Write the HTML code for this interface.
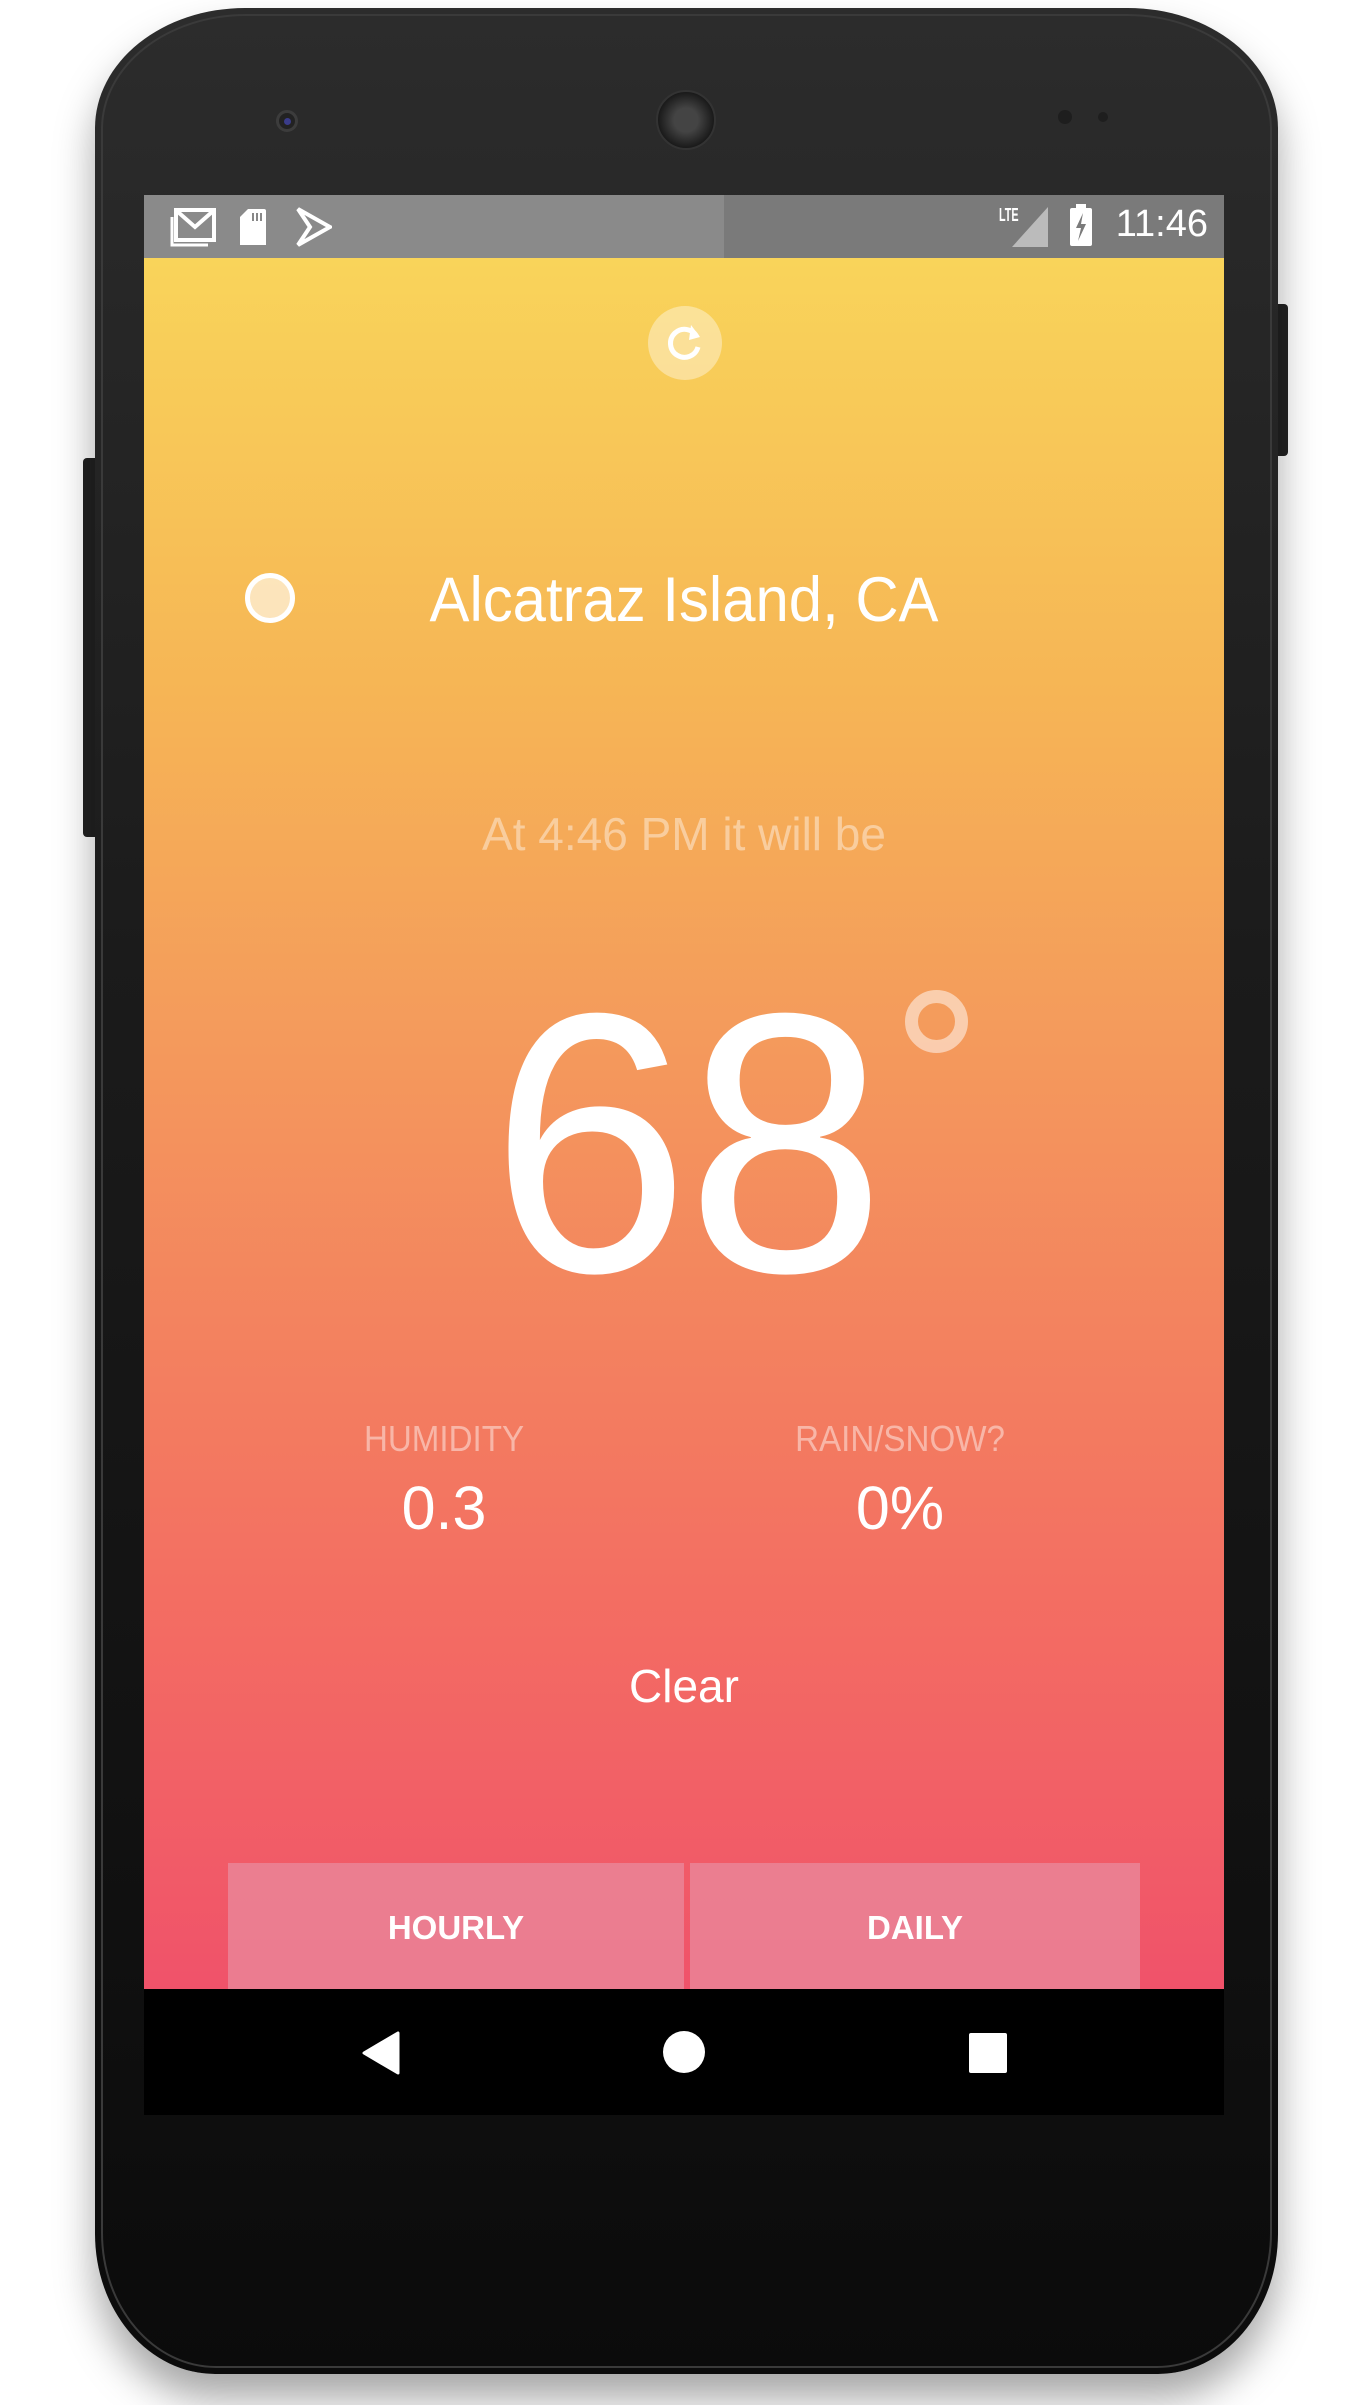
<!DOCTYPE html>
<html><head><meta charset="utf-8"><style>
html,body{margin:0;padding:0;background:#fff;}
body{width:1370px;height:2405px;position:relative;overflow:hidden;font-family:"Liberation Sans",sans-serif;}
.abs{position:absolute;}
.phone{left:95px;top:8px;width:1183px;height:2366px;border-radius:150px 150px 120px 120px/120px 120px 140px 140px;background:linear-gradient(180deg,#2c2c2c 0%,#1b1b1b 40%,#0b0b0b 100%);box-shadow:0 25px 40px rgba(0,0,0,.35);}
.phone:before{content:"";position:absolute;left:6px;right:6px;top:6px;bottom:6px;border-radius:145px 145px 115px 115px/115px 115px 135px 135px;border:2px solid #3a3a3a;}
.screen{left:144px;top:195px;width:1080px;height:1920px;overflow:hidden;}
.app{left:0;top:63px;width:1080px;height:1734px;background:linear-gradient(180deg,#f9d45a 0%,#f6b555 25%,#f49a5c 45%,#f3825f 62%,#f36a63 80%,#f0526a 100%);}
.t{position:absolute;left:0;width:1080px;text-align:center;color:#fff;white-space:nowrap;}
</style></head><body>
<div class="abs" style="left:1276px;top:304px;width:12px;height:152px;background:#222;border-radius:0 4px 4px 0"></div>
<div class="abs" style="left:83px;top:458px;width:14px;height:379px;background:#222;border-radius:4px 0 0 4px"></div>
<div class="abs phone"></div>
<div class="abs" style="left:276px;top:110px;width:22px;height:22px;border-radius:50%;background:#222;border:3px solid #3c3c3c;box-sizing:border-box"><div style="margin:5px;width:7px;height:7px;border-radius:50%;background:#3a3c8a"></div></div>
<div class="abs" style="left:656px;top:90px;width:56px;height:56px;border-radius:50%;background:radial-gradient(#444 30%,#1a1a1a 70%);border:2px solid #333"></div>
<div class="abs" style="left:1058px;top:110px;width:14px;height:14px;border-radius:50%;background:#1e1e1e"></div>
<div class="abs" style="left:1098px;top:112px;width:10px;height:10px;border-radius:50%;background:#1e1e1e"></div>
<div class="abs screen">
  <div class="abs" style="left:0;top:0;width:1080px;height:63px;background:#7a7a7a"></div>
  <div class="abs" style="left:0;top:0;width:580px;height:63px;background:#8a8a8a"></div>
  <svg class="abs" style="left:26px;top:12px" width="46" height="40" viewBox="0 0 46 40"><rect x="6" y="3" width="38" height="30" fill="none" stroke="#fff" stroke-width="4"/><path d="M8 5 L25 20 L42 5" fill="none" stroke="#fff" stroke-width="4"/><path d="M2 10 V38 H38" fill="none" stroke="#fff" stroke-width="3"/></svg>
  <svg class="abs" style="left:94px;top:12px" width="30" height="40" viewBox="0 0 30 40"><path d="M10 2 H26 Q28 2 28 4 V38 H2 V10 Z" fill="#fff"/><rect x="14" y="6" width="2" height="8" fill="#888"/><rect x="18" y="6" width="2" height="8" fill="#888"/><rect x="22" y="6" width="2" height="8" fill="#888"/></svg>
  <svg class="abs" style="left:152px;top:12px" width="36" height="40" viewBox="0 0 36 40"><path d="M2 2 L34 20 L2 38 L14 20 Z" fill="none" stroke="#fff" stroke-width="4"/></svg>
  <div class="abs" style="left:855px;top:10px;color:#fff;font-size:18px;font-weight:bold;transform:scaleX(.6);transform-origin:left">LTE</div>
  <svg class="abs" style="left:866px;top:10px" width="40" height="44"><path d="M38 2 V42 H2 Z" fill="#bbb"/></svg>
  <div class="abs" style="left:926px;top:13px;width:22px;height:38px;background:#fff;border-radius:2px"></div>
  <div class="abs" style="left:932px;top:9px;width:10px;height:6px;background:#fff"></div>
  <svg class="abs" style="left:928px;top:17px" width="18" height="30"><path d="M11 1 L4 16 H9 L6 29 L14 12 H9 Z" fill="#7a7a7a"/></svg>
  <div class="abs" style="left:962px;top:8px;color:#fff;font-size:38px;width:102px;text-align:right">11:46</div>

  <div class="abs app">
    <svg class="abs" style="left:503px;top:47px" width="76" height="76" viewBox="0 0 76 76"><circle cx="38" cy="38" r="37" fill="rgba(255,255,255,0.38)"/><path d="M50 32 A14 14 0 1 0 51 42" fill="none" stroke="#fff" stroke-width="5"/><path d="M44 20 L53 32 L42 35 Z" fill="#fff"/></svg>
    <div class="abs" style="left:101px;top:315px;width:50px;height:50px;border-radius:50%;box-sizing:border-box;border:5px solid #fff;background:rgba(255,255,255,0.6)"></div>
    <div class="t" style="top:302px;font-size:63px;line-height:80px;transform:scaleX(.95)">Alcatraz Island, CA</div>
    <div class="t" style="top:548px;font-size:46px;line-height:56px;color:rgba(255,255,255,0.42)">At 4:46 PM it will be</div>
    <div class="t" style="left:2px;top:656px;font-size:370px;line-height:460px;transform:scaleX(.97);letter-spacing:-4px">68</div>
    <div class="abs" style="left:761px;top:732px;width:63px;height:63px;border-radius:50%;box-sizing:border-box;border:13px solid rgba(255,255,255,0.5)"></div>
    <div class="abs" style="left:200px;top:1159px;width:200px;text-align:center;color:rgba(255,255,255,0.45);font-size:36px;line-height:44px;transform:scaleX(.92)">HUMIDITY</div>
    <div class="abs" style="left:200px;top:1215px;width:200px;text-align:center;color:#fff;font-size:61px;line-height:70px">0.3</div>
    <div class="abs" style="left:636px;top:1159px;width:240px;text-align:center;color:rgba(255,255,255,0.45);font-size:36px;line-height:44px;transform:scaleX(.92)">RAIN/SNOW?</div>
    <div class="abs" style="left:656px;top:1215px;width:200px;text-align:center;color:#fff;font-size:61px;line-height:70px">0%</div>
    <div class="t" style="top:1400px;font-size:46px;line-height:56px">Clear</div>
    <div class="abs" style="left:84px;top:1605px;width:456px;height:129px;background:rgba(233,140,160,0.72);color:#fff;font-weight:bold;font-size:33px;line-height:129px;text-align:center">HOURLY</div>
    <div class="abs" style="left:546px;top:1605px;width:450px;height:129px;background:rgba(233,140,160,0.72);color:#fff;font-weight:bold;font-size:33px;line-height:129px;text-align:center">DAILY</div>
  </div>
  <div class="abs" style="left:0;top:1794px;width:1080px;height:126px;background:#000"></div>
  <svg class="abs" style="left:216px;top:1836px" width="40" height="44"><path d="M38 2 V42 L4 22 Z" fill="#fff" stroke="#fff" stroke-width="3" stroke-linejoin="round"/></svg>
  <div class="abs" style="left:519px;top:1836px;width:42px;height:42px;border-radius:50%;background:#fff"></div>
  <div class="abs" style="left:825px;top:1838px;width:38px;height:40px;background:#fff;border-radius:2px"></div>
</div>
</body></html>
